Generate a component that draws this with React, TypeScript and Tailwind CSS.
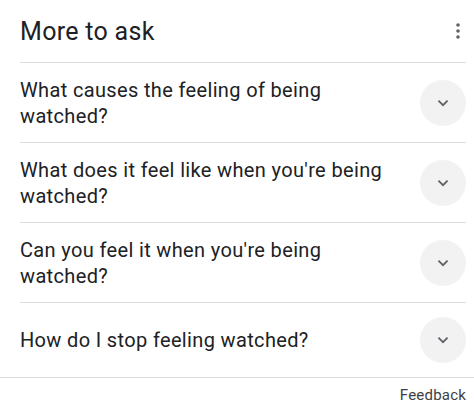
import React from "react";

const questions = [
  "What causes the feeling of being watched?",
  "What does it feel like when you're being watched?",
  "Can you feel it when you're being watched?",
  "How do I stop feeling watched?",
];

function Chevron() {
  return (
    <svg width="24" height="24" viewBox="0 0 24 24" fill="none">
      <path d="M7.4 9.6 12 14.2l4.6-4.6" stroke="#5f6368" strokeWidth="1.8" strokeLinecap="butt" />
    </svg>
  );
}

export default function App() {
  return (
    <div className="w-[474px] h-[413px] bg-white text-[#202124] overflow-hidden" style={{ fontFamily: "Roboto, 'Open Sans', sans-serif" }}>
      <div className="pl-[20px] pr-[8px]">
        <div className="h-[63px] flex items-center justify-between border-b border-[#dadce0]">
          <span className="text-[25px] leading-none tracking-[0.3px]">More to ask</span>
          <svg width="6" height="18" viewBox="0 0 6 18" className="mr-[5px]">
            <circle cx="3" cy="3" r="1.8" fill="#5f6368" />
            <circle cx="3" cy="9" r="1.8" fill="#5f6368" />
            <circle cx="3" cy="15" r="1.8" fill="#5f6368" />
          </svg>
        </div>
        {questions.map((q, i) => (
          <div
            key={i}
            className={
              "flex items-center justify-between " +
              (i < 3 ? "h-[80px] border-b border-[#dadce0]" : "h-[74px]")
            }
          >
            <span className="text-[20px] leading-[26px] tracking-[0.35px] w-[385px]">{q}</span>
            <div className="w-[46px] h-[46px] rounded-full bg-[#f2f2f2] flex items-center justify-center shrink-0">
              <Chevron />
            </div>
          </div>
        ))}
      </div>
      <div className="border-t border-[#dadce0] h-[36px] flex items-center justify-end pr-[8px]">
        <span className="text-[15px] text-[#3c4043] tracking-[0.2px]">Feedback</span>
      </div>
    </div>
  );
}
